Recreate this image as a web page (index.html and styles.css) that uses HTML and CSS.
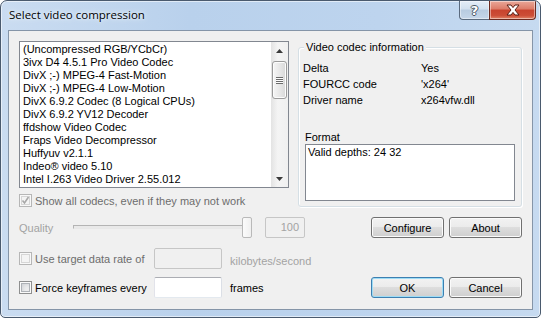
FILE: index.html
```html
<!DOCTYPE html>
<html lang="en">

<head>
    <meta charset="utf-8">
    <title>Select video compression</title>
    <link rel="stylesheet" href="styles.css">
</head>

<body>

    <div class="window">
        <div class="titlebar">
            <span class="title">Select video compression</span>
            <div class="caption">
                <div class="cap help"><span>?</span></div>
                <div class="cap close">
                    <svg width="16" height="12" viewBox="0 0 16 12">
                        <path d="M2 1 H6 L8 3.6 L10 1 H14 L10 6 L14 11 H10 L8 8.4 L6 11 H2 L6 6 Z" fill="#fff" stroke="#5b1e14" stroke-width="1" stroke-linejoin="round"/>
                    </svg>
                </div>
            </div>
        </div>

        <div class="client">
            <div class="top">
                <div class="left">
                    <div class="listbox">
                        <ul class="items">
                            <li>(Uncompressed RGB/YCbCr)</li>
                            <li>3ivx D4 4.5.1 Pro Video Codec</li>
                            <li>DivX ;-) MPEG-4 Fast-Motion</li>
                            <li>DivX ;-) MPEG-4 Low-Motion</li>
                            <li>DivX 6.9.2 Codec (8 Logical CPUs)</li>
                            <li>DivX 6.9.2 YV12 Decoder</li>
                            <li>ffdshow Video Codec</li>
                            <li>Fraps Video Decompressor</li>
                            <li>Huffyuv v2.1.1</li>
                            <li>Indeo® video 5.10</li>
                            <li>Intel I.263 Video Driver 2.55.012</li>
                        </ul>
                        <div class="scrollbar">
                            <div class="arrow">
                                <svg width="7" height="4" viewBox="0 0 7 4"><path d="M0 4 L3.5 0 L7 4 Z" fill="#3a3a3a"/></svg>
                            </div>
                            <div class="track">
                                <div class="thumb"><span class="grip"></span></div>
                            </div>
                            <div class="arrow">
                                <svg width="7" height="4" viewBox="0 0 7 4"><path d="M0 0 L7 0 L3.5 4 Z" fill="#3a3a3a"/></svg>
                            </div>
                        </div>
                    </div>
                    <div class="check-row show-all">
                        <span class="checkbox disabled">
                            <svg width="9" height="9" viewBox="0 0 9 9"><path d="M1.5 4.5 L3.5 7 L7.5 1" fill="none" stroke="#a8a8a8" stroke-width="1.6"/></svg>
                        </span>
                        <span class="label muted">Show all codecs, even if they may not work</span>
                    </div>
                </div>

                <div class="group">
                    <div class="group-title"><span>Video codec information</span></div>
                    <div class="info">
                        <span>Delta</span><span>Yes</span>
                        <span>FOURCC code</span><span>'x264'</span>
                        <span>Driver name</span><span>x264vfw.dll</span>
                    </div>
                    <div class="format-label">Format</div>
                    <div class="format-box">Valid depths: 24 32</div>
                </div>
            </div>

            <div class="row quality">
                <span class="quality-label">Quality</span>
                <div class="slider">
                    <div class="channel"></div>
                    <div class="slider-thumb"></div>
                </div>
                <div class="edit disabled value">100</div>
                <button class="btn push-right">Configure</button>
                <button class="btn">About</button>
            </div>

            <div class="row rate">
                <div class="check-row fixed">
                    <span class="checkbox disabled"></span>
                    <span class="label muted">Use target data rate of</span>
                </div>
                <div class="edit disabled"></div>
                <span class="unit grey">kilobytes/second</span>
            </div>

            <div class="row keyframes">
                <div class="check-row fixed">
                    <span class="checkbox"></span>
                    <span class="label">Force keyframes every</span>
                </div>
                <div class="edit"></div>
                <span class="unit">frames</span>
                <button class="btn default push-right">OK</button>
                <button class="btn">Cancel</button>
            </div>
        </div>
    </div>

</body>

</html>
```

FILE: styles.css
```css
body {
    margin: 0;
    padding: 0;
    background-color: #ffffff;
    font-family: 'Liberation Sans', Arial, sans-serif;
    font-size: 11px;
    color: #000;
}

/* fenetre */
.window {
    width: 541px;
    height: 318px;
    box-sizing: border-box;
    border: 1px solid #4a5a6e;
    border-radius: 7px 7px 5px 5px;
    background: linear-gradient(90deg, #cadcf1 0%, #b9d1ec 35%, #bdd4ee 70%, #c6daf0 100%);
    box-shadow: inset 0 0 0 1px rgba(255, 255, 255, 0.55);
    padding: 0 7px 7px 7px;
    display: flex;
    flex-direction: column;
    overflow: hidden;
}

.titlebar {
    height: 29px;
    display: flex;
    align-items: flex-start;
    justify-content: space-between;
    margin: 0 -1px 0 0;
}

.title {
    font-family: 'Open Sans', sans-serif;
    font-size: 11.5px;
    color: #000;
    padding-left: 1px;
    margin-top: 6px;
    text-shadow: 0 0 6px #e8f1fb, 0 0 3px #eef5fc;
}

.caption {
    display: flex;
    margin-right: -2px;
}

.cap {
    height: 19px;
    box-sizing: border-box;
    border: 1px solid #5a6a7e;
    border-top: none;
    display: flex;
    align-items: center;
    justify-content: center;
    box-shadow: inset 0 0 0 1px rgba(255, 255, 255, 0.45);
}

.help {
    width: 30px;
    border-radius: 0 0 0 4px;
    border-right: none;
    background: linear-gradient(#e4edf7 0%, #d2e0ef 45%, #b8cbe0 50%, #c5d6e9 100%);
}

.help span {
    font-family: 'DejaVu Sans', sans-serif;
    font-weight: bold;
    font-size: 13px;
    color: #fff;
    text-shadow: 1px 0 0 #4b5766, -1px 0 0 #4b5766, 0 1px 0 #4b5766, 0 -1px 0 #4b5766;
    line-height: 1;
}

.close {
    width: 47px;
    border-radius: 0 0 4px 0;
    border-color: #6b2a20;
    background: linear-gradient(#e9a899 0%, #dc7b68 45%, #c8432e 50%, #cc4d36 80%, #e08467 100%);
}

.client {
    flex: 1;
    background-color: #f0f0f0;
    border: 1px solid #8595a8;
    padding: 10px 10px 10px 10px;
    display: flex;
    flex-direction: column;
}

.top {
    display: flex;
    align-items: flex-start;
    gap: 9px;
}

.left {
    width: 270px;
}

/* liste des codecs */
.listbox {
    height: 147px;
    box-sizing: border-box;
    border: 1px solid #828790;
    background-color: #fff;
    display: flex;
    overflow: hidden;
}

.items {
    flex: 1;
    list-style: none;
    margin: 0;
    padding: 1px 0 0 3px;
    line-height: 13px;
    white-space: nowrap;
    overflow: hidden;
}

.scrollbar {
    width: 17px;
    display: flex;
    flex-direction: column;
    background: linear-gradient(90deg, #e3e3e3, #f4f4f4 40%, #f0f0f0);
}

.arrow {
    height: 17px;
    display: flex;
    align-items: center;
    justify-content: center;
}

.track {
    flex: 1;
    padding: 2px 1px 0 1px;
}

.thumb {
    height: 38px;
    box-sizing: border-box;
    border: 1px solid #9b9b9b;
    border-radius: 3px;
    background: linear-gradient(90deg, #f6f6f6, #e8e8e8 50%, #d8d8d8);
    box-shadow: inset 0 0 0 1px #fdfdfd;
    display: flex;
    align-items: center;
    justify-content: center;
}

.grip {
    width: 7px;
    height: 7px;
    background: repeating-linear-gradient(#6b6b6b 0 1px, #fdfdfd 1px 2px);
}

.check-row {
    display: flex;
    align-items: center;
    gap: 3px;
}

.show-all {
    margin-top: 6px;
}

.checkbox {
    width: 13px;
    height: 13px;
    box-sizing: border-box;
    border: 1px solid #8e8f8f;
    background-color: #f4f4f4;
    box-shadow: inset 0 0 0 1px #fafafa, inset 0 0 0 2px #aeb2b7, inset 2px 2px 6px #c6c9ce;
    display: flex;
    align-items: center;
    justify-content: center;
    flex-shrink: 0;
}

.checkbox.disabled {
    border-color: #b6b6b6;
    background-color: #f4f4f4;
    box-shadow: inset 0 0 0 1px #f8f8f8, inset 0 0 0 2px #d6d6d6;
}

.muted {
    color: #6d6d6d;
}

.grey {
    color: #a3a3a3;
}

/* groupe infos */
.group {
    width: 224px;
    height: 160px;
    box-sizing: border-box;
    margin-top: 6px;
    border: 1px solid #d5dfe5;
    border-radius: 3px;
    box-shadow: inset 1px 1px 0 #fff, 1px 1px 0 #fff;
}

.group-title {
    margin-top: -7px;
    padding-left: 5px;
    line-height: 13px;
}

.group-title span {
    background-color: #f0f0f0;
    padding: 0 2px;
}

.info {
    display: grid;
    grid-template-columns: 118px 1fr;
    margin-top: 6px;
    padding-left: 4px;
    line-height: 16px;
}

.format-label {
    margin-top: 23px;
    padding-left: 6px;
    line-height: 13px;
}

.format-box {
    margin-left: 6px;
    width: 210px;
    height: 57px;
    box-sizing: border-box;
    border: 1px solid #828790;
    background-color: #fff;
    padding: 1px 2px;
    line-height: 13px;
}

/* lignes du bas */
.row {
    display: flex;
    align-items: center;
    height: 21px;
}

.quality {
    margin-top: 10px;
}

.rate {
    margin-top: 10px;
}

.keyframes {
    margin-top: 8px;
}

.quality-label {
    width: 54px;
    color: #a3a3a3;
}

.slider {
    position: relative;
    width: 180px;
    height: 21px;
}

.channel {
    margin-top: 8px;
    width: 174px;
    height: 4px;
    box-sizing: border-box;
    border: 1px solid #b4b4b4;
    border-bottom-color: #e8e8e8;
    background-color: #e9e9e9;
}

.slider-thumb {
    position: absolute;
    left: 169px;
    top: 0;
    width: 10px;
    height: 21px;
    box-sizing: border-box;
    border: 1px solid #b9b9b9;
    border-radius: 2px;
    background: linear-gradient(90deg, #fbfbfb, #f0f0f0);
}

.edit {
    width: 68px;
    height: 21px;
    box-sizing: border-box;
    border: 1px solid #abadb3;
    border-color: #abadb3 #dbdfe6 #e3e9ef #e2e3ea;
    border-radius: 2px;
    background-color: #fff;
}

.edit.disabled {
    border-color: #c6c6c6;
    background-color: #f0f0f0;
}

.value {
    width: 40px;
    margin-left: 12px;
    color: #a3a3a3;
    text-align: right;
    padding: 3px 5px 0 0;
    line-height: 13px;
}

.fixed {
    width: 135px;
}

.unit {
    margin-left: 8px;
}

.rate .unit {
    padding-top: 5px;
}

.btn {
    width: 73px;
    height: 21px;
    box-sizing: border-box;
    border: 1px solid #707070;
    border-radius: 3px;
    background: linear-gradient(#f2f2f2 0%, #ebebeb 50%, #dddddd 50%, #cfcfcf 100%);
    box-shadow: inset 0 0 0 1px #fbfbfb;
    font-family: 'Liberation Sans', Arial, sans-serif;
    font-size: 11px;
    color: #000;
    padding: 0;
    margin-left: 5px;
}

.push-right {
    margin-left: auto;
}

.btn.default {
    border-color: #3c7fb1;
    box-shadow: inset 0 0 0 1px #9edcf5;
}
```
